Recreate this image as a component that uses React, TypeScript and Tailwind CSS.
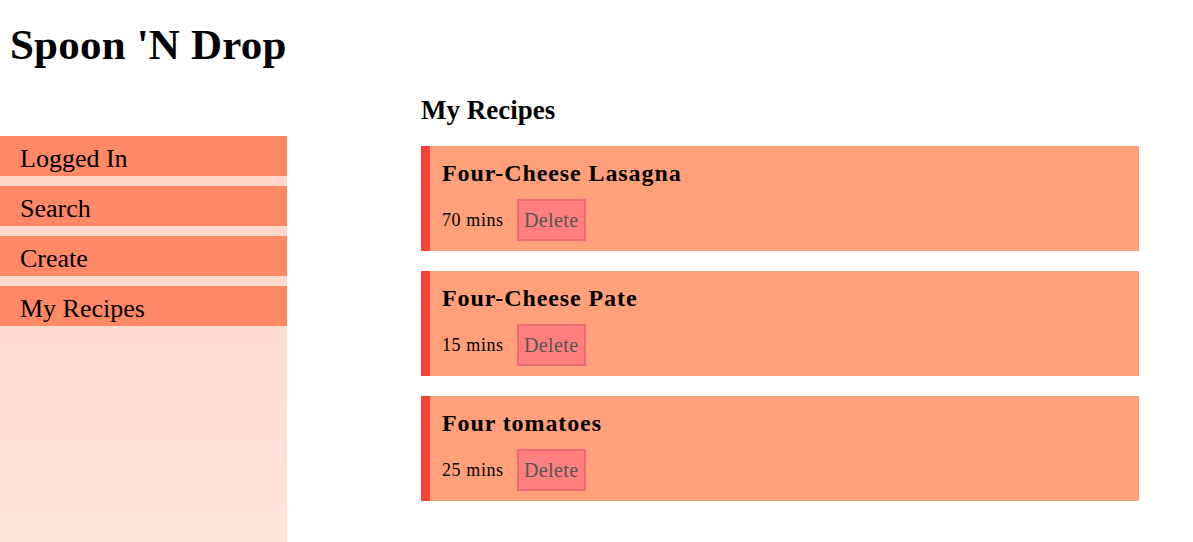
import React from 'react';

const navItems = ['Logged In', 'Search', 'Create', 'My Recipes'];

const recipes = [
  { name: 'Four-Cheese Lasagna', time: '70 mins' },
  { name: 'Four-Cheese Pate', time: '15 mins' },
  { name: 'Four tomatoes', time: '25 mins' },
];

const App = () => {
  return (
    <div className="h-screen flex flex-col bg-white text-black font-['Liberation_Serif',serif]">
      {/* Header */}
      <header className="h-[88px] shrink-0 flex items-center px-[10px]">
        <h1 className="text-[43px] font-bold leading-none tracking-[0.2px]">Spoon 'N Drop</h1>
      </header>

      <div className="flex flex-1">
        {/* Sidebar */}
        <aside className="w-[287px] mt-[48px] bg-gradient-to-b from-[#ffd4c6] to-[#ffe3d9] flex flex-col gap-[10px]">
          {navItems.map((item) => (
            <div key={item} className="h-[40px] bg-[#ff8866] flex items-center px-[20px] pt-[5px] text-[26px]">
              {item}
            </div>
          ))}
        </aside>

        {/* Main */}
        <main className="ml-[134px] w-[718px] pt-[6px]">
          <h2 className="text-[27px] font-bold leading-[32px]">My Recipes</h2>
          <div className="mt-[20px] flex flex-col gap-[20px]">
            {recipes.map((r) => (
              <div key={r.name} className="h-[105px] bg-[#ffa07a] border-l-[9px] border-[#f44336] pl-[12px] pt-[12px]">
                <h3 className="text-[24px] font-bold leading-[30px] tracking-[0.9px]">{r.name}</h3>
                <div className="mt-[11px] flex items-center gap-[13px]">
                  <span className="text-[18px] tracking-[0.6px]">{r.time}</span>
                  <button className="w-[69px] h-[42px] bg-[#ff7f7f] border-2 border-[#ec6a72] text-[20px] tracking-[0.4px] text-[#555]">
                    Delete
                  </button>
                </div>
              </div>
            ))}
          </div>
        </main>
      </div>
    </div>
  );
};

export default App;
